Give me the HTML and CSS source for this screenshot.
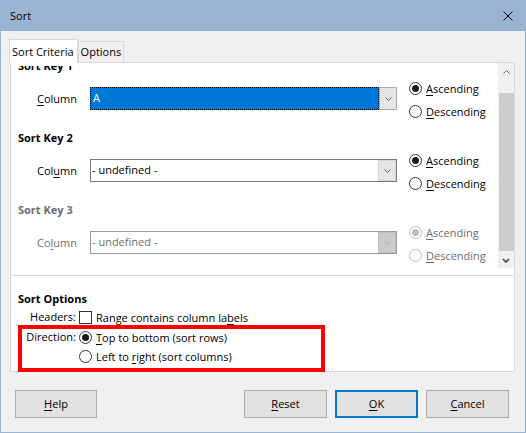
FILE: index.html
```html
<!DOCTYPE html>
<html>
<head>
<meta charset="utf-8">
<title>Sort</title>
<link rel="stylesheet" href="styles.css">
</head>
<body>
<div class="window">
  <div class="titlebar">
    <span class="title">Sort</span>
    <svg class="close" width="10" height="10" viewBox="0 0 10 10"><path d="M0.5 0.5L9.5 9.5M9.5 0.5L0.5 9.5" stroke="#000" stroke-width="1" fill="none"/></svg>
  </div>
  <div class="body">
    <div class="tabs">
      <div class="tab active">Sort Criteria</div>
      <div class="tab">Options</div>
    </div>
    <div class="page">
      <div class="scroller">
        <div class="viewport">
        <div class="keys">
          <section class="key">
            <h3>Sort Key 1</h3>
            <div class="row">
              <div class="lbl"><u>C</u>olumn</div>
              <div class="combo focused">
                <div class="field">A</div>
                <div class="drop"><svg width="7" height="4" viewBox="0 0 7 4"><path d="M0.5 0.5L3.5 3.5L6.5 0.5" stroke="#606060" fill="none"/></svg></div>
              </div>
              <div class="radios">
                <div class="radio checked"><span class="circle"></span><span><u>A</u>scending</span></div>
                <div class="radio"><span class="circle"></span><span><u>D</u>escending</span></div>
              </div>
            </div>
          </section>
          <section class="key">
            <h3>Sort Key 2</h3>
            <div class="row">
              <div class="lbl">Col<u>u</u>mn</div>
              <div class="combo">
                <div class="field">- undefined -</div>
                <div class="drop"><svg width="7" height="4" viewBox="0 0 7 4"><path d="M0.5 0.5L3.5 3.5L6.5 0.5" stroke="#606060" fill="none"/></svg></div>
              </div>
              <div class="radios">
                <div class="radio checked"><span class="circle"></span><span><u>A</u>scending</span></div>
                <div class="radio"><span class="circle"></span><span><u>D</u>escending</span></div>
              </div>
            </div>
          </section>
          <section class="key disabled">
            <h3>Sort Key 3</h3>
            <div class="row">
              <div class="lbl">Co<u>l</u>umn</div>
              <div class="combo">
                <div class="field">- undefined -</div>
                <div class="drop"><svg width="7" height="4" viewBox="0 0 7 4"><path d="M0.5 0.5L3.5 3.5L6.5 0.5" stroke="#a0a0a0" fill="none"/></svg></div>
              </div>
              <div class="radios">
                <div class="radio checked"><span class="circle"></span><span><u>A</u>scending</span></div>
                <div class="radio"><span class="circle"></span><span><u>D</u>escending</span></div>
              </div>
            </div>
          </section>
        </div>
        </div>
        <div class="scrollbar">
          <div class="arrow"><svg width="7" height="4" viewBox="0 0 7 4"><path d="M0.5 3.5L3.5 0.5L6.5 3.5" stroke="#606060" fill="none"/></svg></div>
          <div class="track"><div class="thumb"></div></div>
          <div class="arrow down"><svg width="8" height="5" viewBox="0 0 8 5"><path d="M1 1L4 4L7 1" stroke="#404040" stroke-width="1.6" fill="none"/></svg></div>
        </div>
      </div>
      <div class="sep"></div>
      <div class="opts">
        <h3>Sort Options</h3>
        <div class="optgrid">
          <div class="olbl">Headers:</div>
          <div class="octl"><span class="check"></span><span>Range contains column la<u>b</u>els</span></div>
          <div class="olbl">Direction:</div>
          <div class="octl"><span class="circle on"></span><span><u>T</u>op to bottom (sort rows)</span></div>
          <div class="olbl"></div>
          <div class="octl last"><span class="circle"></span><span>Left to <u>r</u>ight (sort columns)</span></div>
        </div>
      </div>
    </div>
    <div class="buttons">
      <div class="btn help"><span><u>H</u>elp</span></div>
      <div class="spacer"></div>
      <div class="btn"><span><u>R</u>eset</span></div>
      <div class="btn default"><span><u>O</u>K</span></div>
      <div class="btn"><span><u>C</u>ancel</span></div>
    </div>
  </div>
  <div class="highlight"></div>
</div>
</body>
</html>
```

FILE: styles.css
```css
* { box-sizing: border-box; }
html, body { margin: 0; padding: 0; }
body {
  font-family: "Open Sans", "Noto Sans", sans-serif;
  font-size: 11px;
  color: #000;
  background: #fff;
  width: 526px;
  height: 433px;
  overflow: hidden;
}
u { text-decoration: underline; text-underline-offset: 2px; }

.window {
  position: relative;
  width: 526px;
  height: 433px;
  border: 1px solid #99b4d1;
  border-top: 0;
  background: #f0f0f0;
  display: flex;
  flex-direction: column;
}
.titlebar {
  height: 31px;
  flex: none;
  background: #99b4d1;
  display: flex;
  align-items: center;
  justify-content: space-between;
  padding: 0 12px 0 9px;
  font-size: 11px;
}
.title { line-height: 16px; padding-top: 1px; }
.close { display: block; }

.body { flex: 1; padding: 8px 0 0 9px; display: flex; flex-direction: column; }

.tabs { display: flex; align-items: flex-end; height: 23px; flex: none; }
.tab {
  height: 21px;
  border: 1px solid #d9d9d9;
  border-bottom: 0;
  padding: 2px 2px 0;
  line-height: 16px;
  background: #f0f0f0;
  white-space: nowrap;
}
.tab.active {
  height: 24px;
  margin: 0 0 -1px -1px;
  padding: 4px 3px 0 2px;
  background: #fff;
  position: relative;
  z-index: 1;
}

.page {
  width: 505px;
  height: 310px;
  flex: none;
  border: 1px solid #d9d9d9;
  background: #fff;
  display: flex;
  flex-direction: column;
}
.scroller { height: 205px; flex: none; display: flex; overflow: hidden; }
.viewport { flex: 1; margin-top: 3px; overflow: hidden; }
.keys { margin-top: -8px; }
.key { height: 72px; }
h3 { margin: 0; font-size: 11px; font-weight: 700; line-height: 16px; }
.key h3 { padding-left: 7px; }
.row { display: flex; margin-top: 3px; }
.lbl { width: 79px; padding-left: 26px; margin-top: 10px; line-height: 23px; }
.combo {
  width: 307px;
  height: 23px;
  margin-top: 10px;
  display: flex;
  border: 1px solid #7a7a7a;
  background: #fff;
}
.field { flex: 1; padding-left: 1px; line-height: 20px; white-space: nowrap; }
.drop {
  width: 18px;
  border: 1px solid #d4d4d4;
  background: #e6e6e6;
  display: flex;
  align-items: center;
  justify-content: center;
}
.drop svg { display: block; }
.combo.focused { border: 0; }
.focused .field {
  border: 1px dotted #000;
  background: #0078d7;
  color: #fff;
  padding-left: 2px;
  line-height: 20px;
}
.focused .drop { border: 1px solid #adadad; }

.radios { margin-left: 12px; }
.radio { display: flex; align-items: center; height: 23px; white-space: nowrap; }
.circle {
  width: 13px;
  height: 13px;
  flex: none;
  border: 1px solid #333;
  border-radius: 50%;
  margin-right: 4px;
  background: #fff;
  display: flex;
  align-items: center;
  justify-content: center;
}
.checked .circle::after, .circle.on::after {
  content: "";
  width: 7px;
  height: 7px;
  border-radius: 50%;
  background: #1a1a1a;
}

.disabled { color: #6d6d6d; }
.disabled .combo { border-color: #9a9a9a; }
.disabled .drop { background: #cccccc; border-color: #bfbfbf; }
.disabled .circle { border-color: #bcbcbc; }
.disabled .checked .circle::after { background: #bcbcbc; }

.scrollbar {
  width: 16px;
  flex: none;
  background: #f0f0f0;
  display: flex;
  flex-direction: column;
}
.arrow { height: 17px; display: flex; align-items: center; justify-content: center; }
.arrow svg { display: block; }
.arrow.down { padding-top: 1px; }
.track { flex: 1; padding-top: 13px; padding-left: 1px; }
.thumb { height: 100%; background: #cdcdcd; }

.sep { height: 1px; background: #d9d9d9; margin: 7px 0 0 1px; flex: none; }
.opts { padding: 15px 0 0 7px; }
.optgrid { display: grid; grid-template-columns: 61px auto; grid-template-rows: 20px 20px 19px; }
.olbl { text-align: right; padding-right: 3px; line-height: 20px; }
.octl { display: flex; align-items: center; white-space: nowrap; }
.check {
  width: 13px;
  height: 13px;
  border: 1px solid #333;
  background: #fff;
  margin-right: 4px;
  flex: none;
}

.buttons { display: flex; margin-top: 18px; padding-right: 16px; gap: 8px; }
.btn {
  width: 83px;
  height: 28px;
  border: 1px solid #adadad;
  background: #e1e1e1;
  display: flex;
  align-items: center;
  justify-content: center;
  line-height: 16px;
}
.btn.help { margin-left: 5px; width: 82px; }
.btn.default { border: 2px solid #0078d7; }
.spacer { flex: 1; }

.highlight {
  position: absolute;
  left: 17px;
  top: 325px;
  width: 307px;
  height: 47px;
  border: 4px solid #ff0000;
}
```
